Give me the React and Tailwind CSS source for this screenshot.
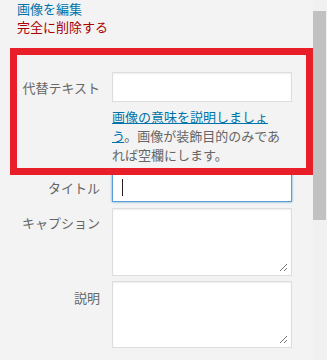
import React from "react";

const font = { fontFamily: '"Noto Sans CJK JP", "Noto Sans", sans-serif' };

function Resize() {
  return (
    <svg width="9" height="9" viewBox="0 0 9 9" className="absolute bottom-[3px] right-[3px]">
      <path d="M8 1 L1 8 M8 5 L5 8" stroke="#777" strokeWidth="1" />
    </svg>
  );
}

export default function App() {
  return (
    <div className="relative flex w-[327px] h-[360px] overflow-hidden bg-[#f3f3f3] text-[13px]" style={font}>
      <div className="w-[313px]">
        <div className="pl-[17px] leading-[18px]">
          <div className="text-[#0073aa]">画像を編集</div>
          <div className="text-[#a00]">完全に削除する</div>
        </div>

        <div className="mt-[36px] grid grid-cols-[100px_180px] gap-x-[12px] text-[#666]">
          <div className="text-right pt-[7px] leading-[18px]">代替テキスト</div>
          <div>
            <div className="h-[30px] bg-white border border-[#ddd] shadow-[inset_0_1px_2px_rgba(0,0,0,0.07)]" />
            <p className="mt-[5px] leading-[19px]">
              <span className="text-[#0073aa] underline">画像の意味を説明しましょう</span>。画像が装飾目的のみであれば空欄にします。
            </p>
          </div>

          <div className="text-right pt-[7px] mt-[8px] leading-[18px]">タイトル</div>
          <div className="mt-[8px] h-[30px] bg-white border border-[#5b9dd9] shadow-[0_0_2px_rgba(30,140,190,0.8)] flex items-center pl-[9px]">
            <div className="w-px h-[17px] bg-[#222]" />
          </div>

          <div className="text-right pt-[6px] mt-[6px] leading-[18px]">キャプション</div>
          <div className="relative mt-[6px] h-[68px] bg-white border border-[#ddd] shadow-[inset_0_1px_2px_rgba(0,0,0,0.07)]">
            <Resize />
          </div>

          <div className="text-right pt-[8px] mt-[5px] leading-[18px]">説明</div>
          <div className="relative mt-[5px] h-[67px] bg-white border border-[#ddd] shadow-[inset_0_1px_2px_rgba(0,0,0,0.07)]">
            <Resize />
          </div>
        </div>
      </div>

      <div className="w-[14px] bg-[#f1f1f1] pt-[11px]">
        <div className="h-[209px] w-[13px] bg-[#c1c1c1]" />
      </div>

      <div className="absolute left-[10px] top-[48px] w-[303px] h-[127px] border-[7px] border-[#e81f29]" />
    </div>
  );
}
